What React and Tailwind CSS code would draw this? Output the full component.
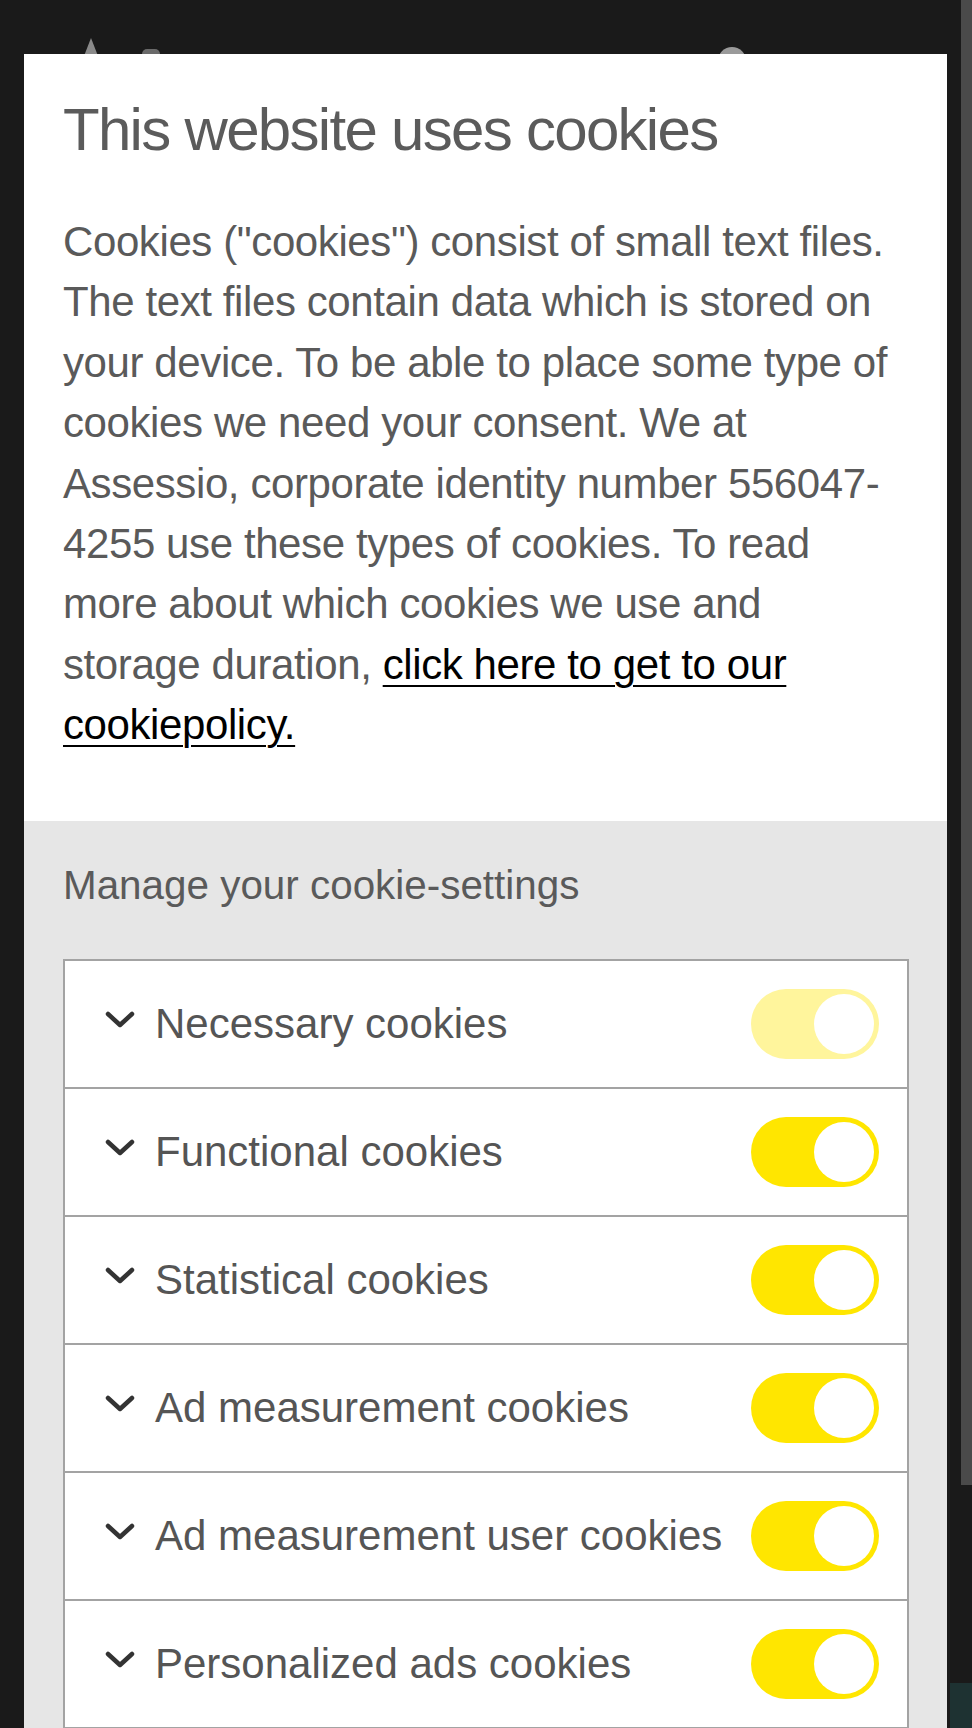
import React from 'react';

const cookieTypes = [
    { label: 'Necessary cookies', locked: true },
    { label: 'Functional cookies' },
    { label: 'Statistical cookies' },
    { label: 'Ad measurement cookies' },
    { label: 'Ad measurement user cookies' },
    { label: 'Personalized ads cookies' },
];

const Chevron = () => (
    <svg width="30" height="18" viewBox="0 0 30 18" className="shrink-0 mb-[8px]">
        <path d="M3 3 L15 14 L27 3" fill="none" stroke="#333333" strokeWidth="4.5" strokeLinecap="round" strokeLinejoin="round" />
    </svg>
);

const Toggle = ({ locked }) => (
    <div
        className={`w-[128px] h-[70px] rounded-full p-[5px] flex justify-end shrink-0 ${
            locked ? 'bg-[#fff59c]' : 'bg-[#ffe600]'
        }`}
    >
        <div className="w-[60px] h-[60px] rounded-full bg-white"></div>
    </div>
);

const App = () => {
    return (
        <div className="relative h-[1728px] w-full overflow-hidden bg-[#1a1a1a] font-['Liberation_Sans',Arial,sans-serif]">
            {/* page behind the overlay, barely visible above the dialog */}
            <svg className="absolute left-[84px] top-[38px]" width="14" height="18" viewBox="0 0 14 18">
                <path d="M7 0 L14 18 L0 18 Z" fill="#8a8a8a" />
            </svg>
            <div className="absolute left-[142px] top-[49px] w-[18px] h-[10px] rounded-full bg-[#6a6a6a]"></div>
            <div className="absolute left-[718px] top-[47px] w-[28px] h-[28px] rounded-full bg-[#9a9a9a]"></div>
            <div className="absolute right-0 top-0 w-[11px] h-[1485px] bg-[#4a4a4a]"></div>
            <div className="absolute left-[950px] top-[1683px] w-[22px] h-[45px] bg-[#1e3232]"></div>

            <div className="relative mt-[54px] ml-[24px] mr-[25px] bg-white">
                <div className="pt-[40px] pl-[39px] pr-[38px] pb-[65px]">
                    <h1 className="text-[60px] leading-[72px] tracking-[-1.7px] text-[#5b5b5b] font-normal">
                        This website uses cookies
                    </h1>
                    <p className="mt-[46px] max-w-[836px] text-[42px] leading-[60.4px] tracking-[-0.4px] text-[#5a5a5a]">
                        Cookies ("cookies") consist of small text files. The text files contain data which is stored on your
                        device. To be able to place some type of cookies we need your consent. We at Assessio, corporate
                        identity number 556047-4255 use these types of cookies. To read more about which cookies we use and
                        storage duration,{' '}
                        <a href="#" className="text-black underline decoration-[2px] underline-offset-[6px]">
                            click here to get to our cookiepolicy.
                        </a>
                    </p>
                </div>

                <div className="bg-[#e6e6e6] pt-[34px] pl-[39px] pr-[38px] pb-[40px]">
                    <h2 className="text-[40.4px] leading-[60px] text-[#5a5a5a] font-normal">Manage your cookie-settings</h2>
                    <div className="mt-[44px] border-2 border-[#a3a3a3] bg-white">
                        {cookieTypes.map((item, i) => (
                            <div
                                key={item.label}
                                className={`flex items-center pl-[40px] pr-[28px] ${
                                    i > 0 ? 'border-t-2 border-[#a3a3a3] h-[128px]' : 'h-[126px]'
                                }`}
                            >
                                <Chevron />
                                <span className="ml-[20px] flex-1 text-[42px] leading-[50px] text-[#555555] whitespace-nowrap">
                                    {item.label}
                                </span>
                                <Toggle locked={item.locked} />
                            </div>
                        ))}
                    </div>
                </div>
            </div>
        </div>
    );
};

export default App;
